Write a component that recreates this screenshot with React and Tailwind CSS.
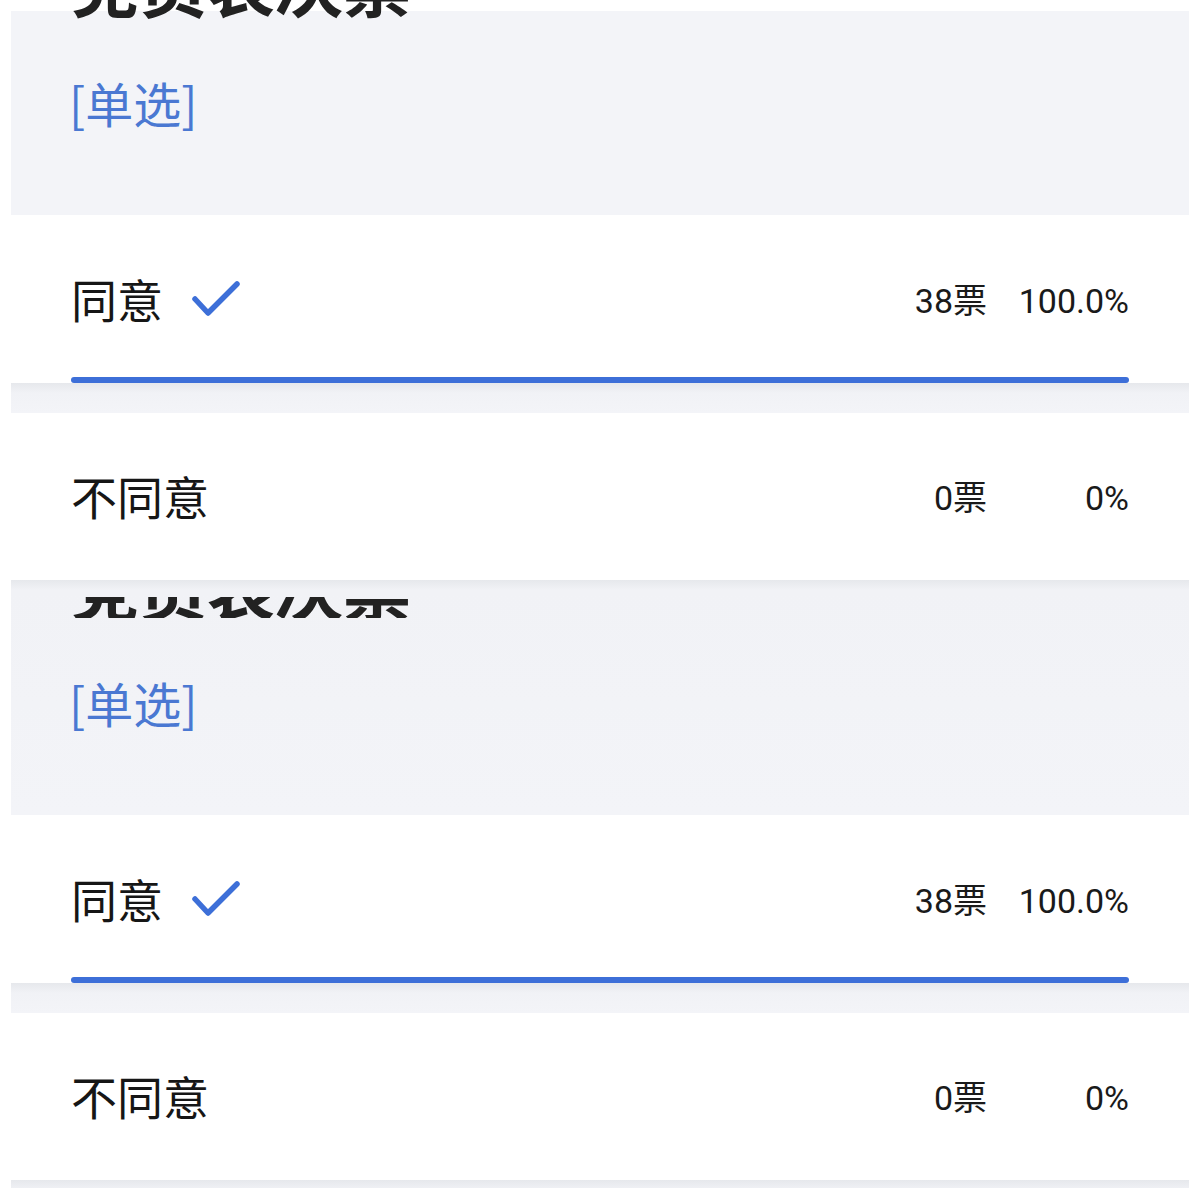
import React from "react";

const FONT = "font-['Inter','Noto_Sans_CJK_SC',sans-serif]";

function Check() {
  return (
    <svg width="50" height="40" viewBox="0 0 50 40" className="ml-[28px] shrink-0">
      <polyline
        points="4,18 17,32 46,3"
        fill="none"
        stroke="#3d6fd8"
        strokeWidth="5.5"
        strokeLinecap="round"
        strokeLinejoin="round"
      />
    </svg>
  );
}

function OptionRow({ label, checked, votes, pct, showBar, tall }) {
  return (
    <div
      className={`bg-white px-[60px] flex flex-col ${
        tall ? "h-[168px] pt-[63px]" : "h-[167px] pt-[62px]"
      }`}
    >
      <div className="flex items-center justify-between h-[46px]">
        <div className="flex items-center">
          <span className="text-[46px] leading-[46px] text-[#161616]">{label}</span>
          {checked && <Check />}
        </div>
        <div className="flex items-center text-[34px] leading-[46px] text-[#1a1a1a] font-['Roboto','Noto_Sans_CJK_SC',sans-serif]">
          <span className="text-right">{votes}</span>
          <span className="w-[142px] text-right">{pct}</span>
        </div>
      </div>
      {showBar && <div className="mt-auto h-[6px] rounded-full bg-[#3d6fd8]" />}
    </div>
  );
}

function GapStrip({ h }) {
  return (
    <div
      className={`${h} bg-[linear-gradient(to_bottom,#e6e8ec,#f1f2f6_10px,#f3f4f8)]`}
    />
  );
}

const TITLE = "h-[68px] text-[68px] leading-[68px] font-bold text-[#222] font-['Noto_Sans_CJK_SC',sans-serif]";
const TAG = "h-[48px] text-[48px] leading-[48px] text-[#4a78d2] font-['Noto_Sans_CJK_SC',sans-serif]";

function Header({ first }) {
  if (first) {
    return (
      <div className="mt-[11px] h-[204px] bg-[#f3f4f8] pl-[58px] pr-[60px]">
        <div className={`mt-[-62px] pl-[2px] ${TITLE}`}>党员表决票</div>
        <div className={`mt-[61px] ${TAG}`}>[单选]</div>
      </div>
    );
  }
  return (
    <div className="h-[235px] bg-[linear-gradient(to_bottom,#e6e8ec,#f1f2f6_10px,#f3f4f8)] pl-[58px] pr-[60px] pt-[17px]">
      <div className="h-[21px] overflow-hidden">
        <div className={`mt-[-44px] pl-[2px] ${TITLE}`}>党员表决票</div>
      </div>
      <div className={`mt-[60px] ${TAG}`}>[单选]</div>
    </div>
  );
}

function Block({ first }) {
  return (
    <div className="flex flex-col">
      <Header first={first} />
      <OptionRow label="同意" checked votes="38票" pct="100.0%" showBar tall />
      <GapStrip h="h-[30px]" />
      <OptionRow label="不同意" votes="0票" pct="0%" />
    </div>
  );
}

export default function App() {
  return (
    <div className={`w-[1200px] h-[1200px] overflow-hidden bg-white px-[11px] ${FONT}`}>
      <Block first />
      <Block />
      <GapStrip h="h-[8px]" />
    </div>
  );
}
